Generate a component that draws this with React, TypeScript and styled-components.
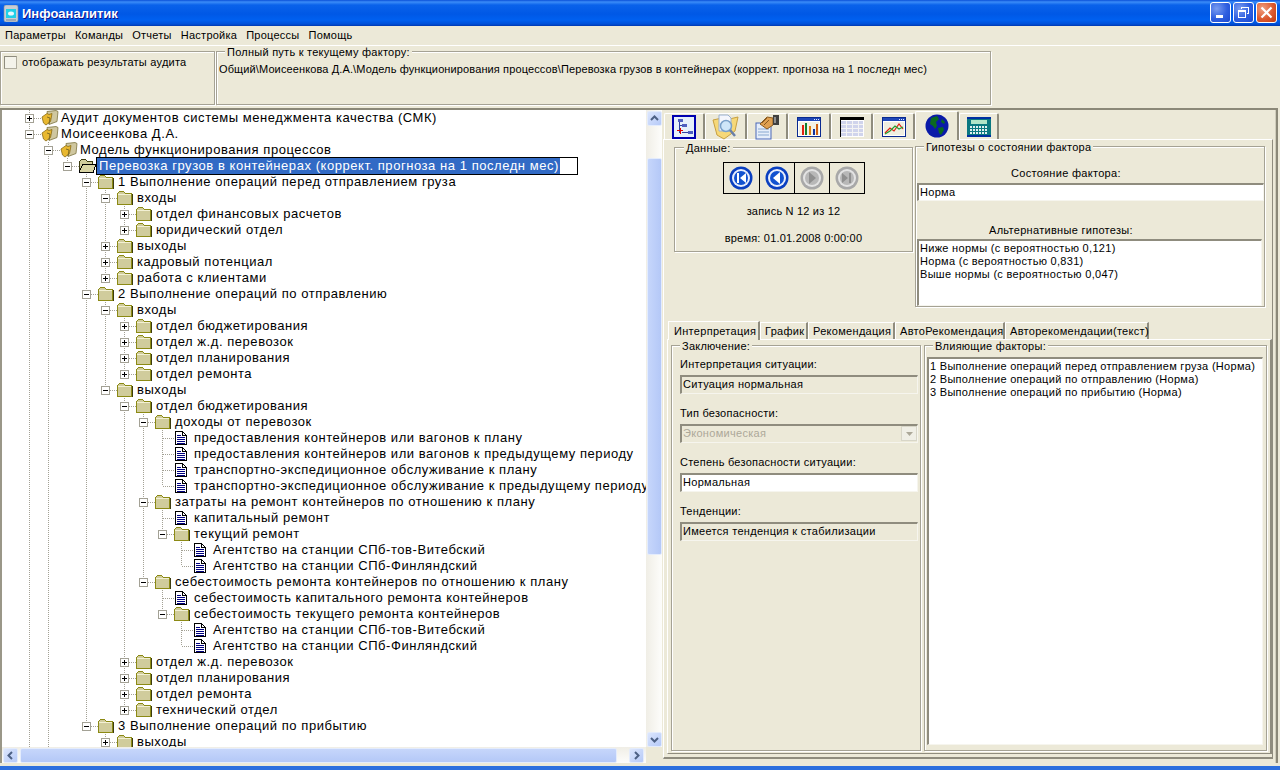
import React from 'react'
import styled, { createGlobalStyle } from 'styled-components'

const GlobalStyle = createGlobalStyle`
  html, body { margin: 0; padding: 0; background: #ece9d8; }
  * { box-sizing: border-box; }
`

type Node = { d: number; t: string; kind?: 'open' | 'closed' | 'leaf' | 'root' | 'sel' }

const rows: Node[] = [
  { d: 0, t: 'Аудит документов системы менеджмента качества (СМК)', kind: 'root' },
  { d: 0, t: 'Моисеенкова Д.А.', kind: 'root' },
  { d: 1, t: 'Модель функционирования процессов', kind: 'root' },
  { d: 2, t: 'Перевозка грузов в контейнерах (коррект. прогноза на 1 последн мес)', kind: 'sel' },
  { d: 3, t: '1 Выполнение операций перед отправлением груза', kind: 'open' },
  { d: 4, t: 'входы', kind: 'open' },
  { d: 5, t: 'отдел финансовых расчетов' },
  { d: 5, t: 'юридический отдел' },
  { d: 4, t: 'выходы' },
  { d: 4, t: 'кадровый потенциал' },
  { d: 4, t: 'работа с клиентами' },
  { d: 3, t: '2 Выполнение операций по отправлению', kind: 'open' },
  { d: 4, t: 'входы', kind: 'open' },
  { d: 5, t: 'отдел бюджетирования' },
  { d: 5, t: 'отдел ж.д. перевозок' },
  { d: 5, t: 'отдел планирования' },
  { d: 5, t: 'отдел ремонта' },
  { d: 4, t: 'выходы', kind: 'open' },
  { d: 5, t: 'отдел бюджетирования', kind: 'open' },
  { d: 6, t: 'доходы от перевозок', kind: 'open' },
  { d: 7, t: 'предоставления контейнеров или вагонов к плану', kind: 'leaf' },
  { d: 7, t: 'предоставления контейнеров или вагонов к предыдущему периоду', kind: 'leaf' },
  { d: 7, t: 'транспортно-экспедиционное обслуживание к плану', kind: 'leaf' },
  { d: 7, t: 'транспортно-экспедиционное обслуживание к предыдущему периоду', kind: 'leaf' },
  { d: 6, t: 'затраты на ремонт контейнеров по отношению к плану', kind: 'open' },
  { d: 7, t: 'капитальный ремонт', kind: 'leaf' },
  { d: 7, t: 'текущий ремонт', kind: 'open' },
  { d: 8, t: 'Агентство на станции СПб-тов-Витебский', kind: 'leaf' },
  { d: 8, t: 'Агентство на станции СПб-Финляндский', kind: 'leaf' },
  { d: 6, t: 'себестоимость ремонта контейнеров по отношению к плану', kind: 'open' },
  { d: 7, t: 'себестоимость капитального ремонта контейнеров', kind: 'leaf' },
  { d: 7, t: 'себестоимость текущего ремонта контейнеров', kind: 'open' },
  { d: 8, t: 'Агентство на станции СПб-тов-Витебский', kind: 'leaf' },
  { d: 8, t: 'Агентство на станции СПб-Финляндский', kind: 'leaf' },
  { d: 5, t: 'отдел ж.д. перевозок' },
  { d: 5, t: 'отдел планирования' },
  { d: 5, t: 'отдел ремонта' },
  { d: 5, t: 'технический отдел' },
  { d: 3, t: '3 Выполнение операций по прибытию', kind: 'open' },
  { d: 4, t: 'выходы' },
]

// levels 0 and 1 run on below the visible part of the tree
const hasNext = (i: number, level: number) => {
  for (let j = i + 1; j < rows.length; j++) {
    if (rows[j].d < level) return false
    if (rows[j].d === level) return true
  }
  return level < 2
}

const isExpanded = (n: Node, i: number) => rows[i + 1] && rows[i + 1].d > n.d

const Window = styled.div`
  width: 1280px;
  height: 770px;
  display: flex;
  flex-direction: column;
  overflow: hidden;
  background: #ece9d8;
  font-family: 'Liberation Sans', Arial, sans-serif;
  font-size: 11px;
  color: #000;
`

const TitleBar = styled.div`
  height: 26px;
  flex: none;
  display: flex;
  align-items: center;
  padding: 0 3px 0 3px;
  background: linear-gradient(to bottom, #0a50d8 0, #3b8cf8 2px, #0a62ea 5px, #0058e6 14px, #0060f0 20px, #0050d8 24px, #0038b0 26px);
`

const TitleText = styled.span`
  margin-left: 3px;
  font-weight: bold;
  font-size: 13px;
  color: #fff;
  text-shadow: 1px 1px 0 #0f1089;
  flex: 1;
`

const CaptionButton = styled.div<{ $close?: boolean }>`
  width: 21px;
  height: 21px;
  margin-left: 2px;
  margin-top: -2px;
  border: 1px solid #fff;
  border-radius: 3px;
  display: flex;
  align-items: center;
  justify-content: center;
  background: ${p => p.$close
    ? 'radial-gradient(circle at 30% 30%, #f0a080, #dc5a30 55%, #c03a10)'
    : 'radial-gradient(circle at 30% 30%, #7a9cf0, #2f5fe0 55%, #1a48d0)'};
`

const MenuBar = styled.div`
  height: 20px;
  flex: none;
  display: flex;
  align-items: center;
  gap: 9px;
  padding: 0 5px 2px;
  border-bottom: 1px solid #fff;
`

const MenuItem = styled.span`
  letter-spacing: 0.25px;
`

const TopPanel = styled.div`
  height: 62px;
  flex: none;
  display: flex;
  gap: 1px;
  padding: 5px 289px 3px 0;
`

const Raised = styled.div<{ $w?: number }>`
  position: relative;
  width: ${p => (p.$w ? `${p.$w}px` : 'auto')};
  flex: ${p => (p.$w ? 'none' : 1)};
  border: 1px solid #a5a294;
  box-shadow: inset 1px 1px 0 #fff, 1px 1px 0 #fff;
`

const AuditBox = styled(Raised)`
  display: flex;
  align-items: flex-start;
  gap: 5px;
  padding: 4px 3px;
`

const Checkbox = styled.span`
  width: 13px;
  height: 13px;
  flex: none;
  background: #f4f3ea;
  border: 1px solid #b0ad9e;
  border-top-color: #8f8c7e;
  border-left-color: #8f8c7e;
`

const Caption = styled.span`
  letter-spacing: 0.25px;
  line-height: 13px;
`

const Legend = styled.span`
  position: absolute;
  top: -6px;
  left: ${p => p.theme.left ?? 8}px;
  padding: 0 2px;
  background: #ece9d8;
  letter-spacing: 0.25px;
  line-height: 13px;
  white-space: nowrap;
`

const PathText = styled.div`
  padding: 11px 2px 0;
  letter-spacing: 0.12px;
  white-space: nowrap;
`

const Main = styled.div`
  flex: 1;
  min-height: 0;
  display: flex;
  border-top: 2px solid #8b8878;
  margin-bottom: 3px;
  margin-right: 2px;
`

const LeftColumn = styled.div`
  width: 662px;
  flex: none;
  display: flex;
  flex-direction: column;
  border-left: 2px solid #9a9788;
`

const TreeArea = styled.div`
  height: 637px;
  flex: none;
  display: flex;
`

const Tree = styled.div`
  flex: 1;
  min-width: 0;
  background: #fff;
  overflow: hidden;
  padding-left: 18px;
`

const Row = styled.div`
  height: 16px;
  display: flex;
  align-items: center;
  white-space: nowrap;
`

const Guide = styled.span<{ $on: boolean }>`
  width: 19px;
  height: 16px;
  flex: none;
  background: ${p => (p.$on
    ? 'linear-gradient(to bottom, #a3a195 50%, transparent 50%) 9px 0 / 1px 2px repeat-y'
    : 'none')};
`

const IconSlot = styled.span`
  width: 20px;
  height: 16px;
  flex: none;
  display: flex;
  align-items: center;
`

const Label = styled.span`
  font-size: 13px;
  letter-spacing: 0.55px;
  line-height: 16px;
`

const EditBox = styled.span`
  width: 480px;
  height: 16px;
  margin-left: -2px;
  background: #fff;
  outline: 1px solid #000;
  display: flex;
  position: relative;
`

const SelectedText = styled(Label)`
  background: #316ac5;
  color: #fff;
  padding: 0 1px 0 2px;
`

const VScroll = styled.div`
  width: 16px;
  flex: none;
  display: flex;
  flex-direction: column;
  align-items: center;
  padding: 1px 0 0;
  background: linear-gradient(to right, #f0eee6, #fdfdfb);
`

const HScroll = styled.div`
  height: 16px;
  flex: none;
  display: flex;
  align-items: center;
  padding-left: 1px;
  background: linear-gradient(to bottom, #f0eee6, #fdfdfb);
`

const ScrollButton = styled.div`
  width: 15px;
  height: 15px;
  flex: none;
  border: 1px solid #e4ecfc;
  border-radius: 2px;
  background: linear-gradient(135deg, #dce6fd, #b6caf8);
  display: flex;
  align-items: center;
  justify-content: center;
`

const VThumb = styled.div`
  width: 15px;
  height: 397px;
  margin-top: 32px;
  margin-bottom: auto;
  border: 1px solid #e4ecfc;
  border-radius: 2px;
  background: linear-gradient(to right, #c6d6fb, #b4c8f7);
`

const HThumb = styled.div`
  width: 597px;
  height: 15px;
  margin-left: 2px;
  margin-right: 12px;
  border: 1px solid #e4ecfc;
  border-radius: 2px;
  background: linear-gradient(to bottom, #c6d6fb, #b4c8f7);
`

const Corner = styled.div`
  width: 16px;
  height: 16px;
  flex: none;
  margin-left: 2px;
  background: #ece9d8;
`

const RightPane = styled.div`
  flex: 1;
  min-width: 0;
  display: flex;
  flex-direction: column;
  padding: 0 3px 4px 1px;
  border-right: 2px solid #8b8878;
  box-shadow: inset -1px 0 0 #d0cdbc;
`

const IconTabs = styled.div`
  height: 29px;
  flex: none;
  display: flex;
  align-items: flex-end;
  padding-left: 1px;
`

const IconTab = styled.div<{ $w: number; $active?: boolean }>`
  width: ${p => p.$w}px;
  height: ${p => (p.$active ? 29 : 26)}px;
  margin-bottom: ${p => (p.$active ? -1 : 0)}px;
  position: relative;
  z-index: ${p => (p.$active ? 2 : 0)};
  background: #ece9d8;
  border-top: 1px solid #fff;
  border-left: 1px solid #fff;
  border-right: 2px solid #8f8c7e;
  border-radius: 2px 2px 0 0;
  display: flex;
  align-items: center;
  justify-content: center;
`

const TabPanel = styled.div`
  flex: 1;
  min-height: 0;
  display: flex;
  flex-direction: column;
  padding: 6px 0 3px 3px;
  border-top: 1px solid #fff;
  border-left: 1px solid #fff;
  border-right: 1px solid #8f8c7e;
  border-bottom: 2px solid #8f8c7e;
`

const UpperRow = styled.div`
  height: 161px;
  flex: none;
  display: flex;
  align-items: flex-start;
  gap: 2px;
  padding-left: 7px;
`

const Group = styled.div<{ $w: number; $h: number }>`
  position: relative;
  width: ${p => p.$w}px;
  height: ${p => p.$h}px;
  flex: none;
  border: 1px solid #a5a294;
  box-shadow: inset 1px 1px 0 #fff, 1px 1px 0 #fff;
`

const DataGroup = styled(Group)`
  margin-top: 1px;
  display: flex;
  flex-direction: column;
  align-items: center;
  padding-top: 14px;
`

const NavBox = styled.div`
  display: flex;
  border: 1px solid #000;
  height: 32px;
`

const NavCell = styled.div`
  width: 35px;
  display: flex;
  align-items: center;
  justify-content: center;
  & + & { border-left: 1px solid #000; }
`

const DataLine = styled.div<{ $top: number }>`
  margin-top: ${p => p.$top}px;
  letter-spacing: 0.2px;
  line-height: 13px;
`

const HypoGroup = styled(Group)`
  display: flex;
  flex-direction: column;
  padding-left: 1px;
`

const CenterLabel = styled.div<{ $top: number; $shift: number }>`
  margin-top: ${p => p.$top}px;
  margin-left: ${p => p.$shift}px;
  letter-spacing: 0.3px;
  line-height: 13px;
`

const Sunken = styled.div<{ $gray?: boolean; $disabled?: boolean; $h?: number }>`
  height: ${p => (p.$h ? `${p.$h}px` : 'auto')};
  background: ${p => (p.$gray || p.$disabled ? '#ece9d8' : '#fff')};
  color: ${p => (p.$disabled ? '#aca899' : '#000')};
  border-top: 2px solid #8f8c7e;
  border-left: 2px solid #8f8c7e;
  border-right: 1px solid #f6f5ee;
  border-bottom: 1px solid #f6f5ee;
  padding: 1px 0 0 1px;
  letter-spacing: 0.3px;
  line-height: 13px;
  display: flex;
  justify-content: space-between;
`

const ListBox = styled(Sunken)<{ $w?: number }>`
  display: block;
  width: ${p => (p.$w ? `${p.$w}px` : 'auto')};
  flex: ${p => (p.$w ? 'none' : 1)};
`

const InnerTabs = styled.div`
  height: 19px;
  flex: none;
  display: flex;
  align-items: flex-end;
  margin-top: 13px;
  padding-left: 1px;
`

const InnerTab = styled.div<{ $w: number; $active?: boolean }>`
  width: ${p => p.$w}px;
  height: ${p => (p.$active ? 19 : 17)}px;
  margin-bottom: ${p => (p.$active ? -1 : 0)}px;
  position: relative;
  z-index: ${p => (p.$active ? 2 : 0)};
  background: #ece9d8;
  border-top: 1px solid #fff;
  border-left: 1px solid #fff;
  border-right: 2px solid #8f8c7e;
  padding: ${p => (p.$active ? 3 : 2)}px 0 0 ${p => (p.$active ? 5 : 4)}px;
  letter-spacing: 0.3px;
  line-height: 13px;
  white-space: nowrap;
`

const InnerPanel = styled.div`
  flex: 1;
  min-height: 0;
  display: flex;
  gap: 3px;
  padding: 5px 3px 2px 3px;
  border-top: 1px solid #fff;
  border-left: 1px solid #fff;
  border-right: 2px solid #8f8c7e;
  border-bottom: 1px solid #8f8c7e;
`

const ConclusionGroup = styled(Raised)`
  display: flex;
  flex-direction: column;
  padding: 12px 2px 0 8px;
`

const FactorsGroup = styled(Raised)`
  display: flex;
  flex-direction: column;
  padding: 11px 3px 5px 2px;
`

const FieldLabel = styled.div<{ $top: number }>`
  margin-top: ${p => p.$top}px;
  margin-bottom: 4px;
  letter-spacing: 0.25px;
  line-height: 13px;
`

const ComboArrow = styled.span`
  width: 16px;
  height: 15px;
  margin-top: -1px;
  background: #f0efe6;
  border: 1px solid #d8d6c8;
  display: flex;
  align-items: center;
  justify-content: center;
`

const BottomStrip = styled.div`
  height: 4px;
  flex: none;
  background: #2c6fde;
`

function FolderIcon() {
  return (
    <svg width="16" height="14" viewBox="0 0 16 14" shapeRendering="crispEdges">
      <path d="M.5 13.5V2.5L2.5.5h4l2 2h6v11z" fill="#d0cc9c" stroke="#8c8a14" />
      <path d="M1 3.5h13" stroke="#f2f0d4" />
      <path d="M15.5 3v11H1.5" fill="none" stroke="#3c3c10" />
    </svg>
  )
}

function RootFolderIcon() {
  return (
    <svg width="18" height="16" viewBox="0 0 18 16">
      <path d="M6 1.5l9-1 2 1-1 10-8 3z" fill="#cfc7a0" stroke="#7c7440" strokeWidth=".8" />
      <path d="M1 7l5-3.5 2 1 3-1-1.5 8L5 15 2.5 13z" fill="#e8b830" stroke="#8a6c14" strokeWidth=".8" />
      <path d="M6 7l3 1-1 6" fill="none" stroke="#6a5a20" strokeWidth=".8" />
    </svg>
  )
}

function OpenFolderIcon() {
  return (
    <svg width="18" height="14" viewBox="0 0 18 14" shapeRendering="crispEdges">
      <path d="M.5 12.5V2.5L2.5.5h4l2 2h5v3" fill="#d0cc9c" stroke="#3c3c10" />
      <path d="M.5 12.5l3-7h13.5l-3 8H1z" fill="#d8d4a4" stroke="#000" />
    </svg>
  )
}

function DocIcon() {
  return (
    <svg width="12" height="14" viewBox="0 0 12 14" shapeRendering="crispEdges" style={{ marginLeft: 1 }}>
      <path d="M.5.5h7l4 4v9H.5z" fill="#fff" stroke="#000" />
      <path d="M7.5.5v4h4" fill="none" stroke="#000" />
      <path d="M2 4.5h4M2 6.5h8M2 8.5h8M2 10.5h8M2 12.5h8" stroke="#000080" />
    </svg>
  )
}

function Connector({ top, bottom, box, plus }: { top: boolean; bottom: boolean; box: boolean; plus: boolean }) {
  return (
    <svg width="21" height="16" viewBox="0 0 21 16" shapeRendering="crispEdges" style={{ flex: 'none' }}>
      {top && <path d="M9.5 0V8" stroke="#a3a195" strokeDasharray="1 1" />}
      {bottom && <path d="M9.5 8V16" stroke="#a3a195" strokeDasharray="1 1" />}
      <path d="M10 8.5H21" stroke="#a3a195" strokeDasharray="1 1" />
      {box && (
        <>
          <rect x="5.5" y="4.5" width="8" height="8" fill="#fff" stroke="#a3a195" />
          <path d="M7 8.5h5" stroke="#000" />
          {plus && <path d="M9.5 6v5" stroke="#000" />}
        </>
      )}
    </svg>
  )
}

function Chevron({ dir }: { dir: 'up' | 'down' | 'left' | 'right' }) {
  const d = {
    up: 'M2 7l3.5-3.5L9 7',
    down: 'M2 4l3.5 3.5L9 4',
    left: 'M7 2L3.5 5.5 7 9',
    right: 'M4 2l3.5 3.5L4 9',
  }[dir]
  return (
    <svg width="11" height="11" viewBox="0 0 11 11">
      <path d={d} fill="none" stroke="#4d6185" strokeWidth="2" />
    </svg>
  )
}

function NavIcon({ glyph, active }: { glyph: 'first' | 'prev' | 'next' | 'last'; active: boolean }) {
  const ring = active ? '#0a3fc0' : '#a8a8a8'
  const rim = active ? '#e8eefc' : '#e4e4e4'
  const core = active ? '#1252d0' : '#b8b8b8'
  const mark = active ? '#fff' : '#909090'
  const shape = {
    first: <path d="M8 7h2v10H8zM17 7v10l-6-5z" />,
    prev: <path d="M15 6v12l-7-6z" />,
    next: <path d="M9 6v12l7-6z" />,
    last: <path d="M7 7v10l6-5zM14 7h2v10h-2z" />,
  }[glyph]
  return (
    <svg width="24" height="24" viewBox="0 0 24 24">
      <circle cx="12" cy="12" r="11.5" fill={ring} />
      <circle cx="12" cy="12" r="9" fill={rim} />
      <circle cx="12" cy="12" r="7" fill={core} />
      <g fill={mark}>{shape}</g>
    </svg>
  )
}

function TreeDiagramIcon() {
  return (
    <svg width="24" height="24" viewBox="0 0 24 24" shapeRendering="crispEdges">
      <rect x=".5" y=".5" width="23" height="23" fill="#e6f0fa" stroke="#0000b0" />
      <rect x="1.5" y="1.5" width="21" height="21" fill="none" stroke="#0000b0" />
      <rect x="6" y="4" width="5" height="3" fill="#5060c0" />
      <rect x="10" y="9" width="5" height="3" fill="#5060c0" />
      <rect x="16" y="16" width="5" height="3" fill="#5060c0" />
      <path d="M7.5 7v11M7.5 10.5H10M10 17.5h6" stroke="#3040a0" />
      <path d="M5 15.5h6M8 13v6" stroke="#e00000" />
    </svg>
  )
}

function SearchFolderIcon() {
  return (
    <svg width="28" height="26" viewBox="0 0 28 26">
      <path d="M1 6l9-2 3 2 13-3-3 14-11 8-7-4z" fill="#f6d878" stroke="#c8a040" />
      <path d="M7 1h9l3 3v13H7z" fill="#f4f6fc" stroke="#9ab0d0" />
      <circle cx="14" cy="12" r="5.5" fill="#cfe6f8" stroke="#7aa0c8" strokeWidth="1.5" />
      <path d="M18 16l5 6" stroke="#6a80a8" strokeWidth="2.5" />
    </svg>
  )
}

function HandDocIcon() {
  return (
    <svg width="26" height="26" viewBox="0 0 26 26">
      <rect x="2" y="9" width="15" height="16" fill="#e6eefa" stroke="#4a68b8" />
      <path d="M4 15h11M4 18h11M4 21h11" stroke="#88a8d0" />
      <path d="M6 10l7-7 6 1v7l-6 4z" fill="#e0a050" stroke="#8a5a20" />
      <path d="M8 9l5-5M10 11l5-5" stroke="#8a5a20" />
      <rect x="19" y="1" width="6" height="10" fill="#404040" />
      <rect x="20" y="3" width="2" height="6" fill="#909090" />
    </svg>
  )
}

function WindowFrame({ children }: { children: React.ReactNode }) {
  return (
    <svg width="24" height="20" viewBox="0 0 24 20" shapeRendering="crispEdges">
      <rect x=".5" y=".5" width="23" height="19" fill="#fff" stroke="#0a2a90" />
      <rect x="1" y="1" width="22" height="3" fill="#2048b8" />
      <path d="M17 2h1M19 2h1M21 2h1" stroke="#e0e8ff" />
      {children}
    </svg>
  )
}

function BarChartIcon() {
  return (
    <WindowFrame>
      <rect x="2" y="5" width="20" height="13" fill="#f4f2e4" />
      <rect x="5" y="8" width="2" height="10" fill="#e02010" />
      <rect x="8" y="6" width="2" height="12" fill="#108030" />
      <rect x="12" y="9" width="2" height="9" fill="#e08010" />
      <rect x="16" y="12" width="2" height="6" fill="#1030a0" />
      <rect x="19" y="7" width="2" height="11" fill="#d06010" />
    </WindowFrame>
  )
}

function TableIcon() {
  return (
    <svg width="24" height="20" viewBox="0 0 24 20" shapeRendering="crispEdges">
      <rect x="0" y="0" width="24" height="20" fill="#fff" stroke="#000" />
      <rect x="0" y="0" width="24" height="3" fill="#000" />
      <rect x="1" y="4" width="22" height="15" fill="#d0d4ec" />
      <path d="M1 7.5h22M1 11.5h22M1 15.5h22M6.5 4v15M12.5 4v15M18.5 4v15" stroke="#f4f4f4" />
    </svg>
  )
}

function LineChartIcon() {
  return (
    <WindowFrame>
      <rect x="2" y="5" width="20" height="13" fill="#f0eee0" />
      <path d="M3 16l5-5 4 3 5-7 4 5" fill="none" stroke="#e02010" strokeWidth="1.2" shapeRendering="auto" />
      <path d="M3 17l5-3 5-5 4 3 4-2" fill="none" stroke="#20a030" strokeWidth="1.2" shapeRendering="auto" />
    </WindowFrame>
  )
}

function GlobeIcon() {
  return (
    <svg width="24" height="24" viewBox="0 0 24 24">
      <circle cx="12" cy="12" r="11.5" fill="#0a1aa8" />
      <path d="M6 4l6-2 2 3-3 3 1 4-2 3-2-3-3-2zM13 14l5-1 1 3-3 5-2-2zM17 5l3 3-1 2-3-2z" fill="#0a6a20" />
    </svg>
  )
}

function CalculatorIcon() {
  return (
    <svg width="24" height="20" viewBox="0 0 24 20" shapeRendering="crispEdges">
      <rect x="0" y="1" width="24" height="18" fill="#0a7880" />
      <rect x="0" y="0" width="24" height="2" fill="#0030a0" />
      <rect x="0" y="18" width="24" height="2" fill="#0030a0" />
      <rect x="4" y="3" width="16" height="4" fill="#b0e4c8" />
      {[9, 12, 15].map(y =>
        [3, 6, 9, 12, 15, 18].map(x => <rect key={`${x}-${y}`} x={x} y={y} width="2" height="2" fill="#e0f0f0" />),
      )}
    </svg>
  )
}

function AppIcon() {
  return (
    <svg width="16" height="17" viewBox="0 0 16 17">
      <rect x="1" y="0" width="14" height="17" rx="2" fill="#c8ccd4" stroke="#8090a0" strokeWidth=".6" />
      <rect x="3" y="4" width="10" height="9" fill="#20d0e8" />
      <ellipse cx="8" cy="8.5" rx="3" ry="2" fill="#e8f8ff" />
      <rect x="3" y="14" width="10" height="2" fill="#a0a8b4" />
    </svg>
  )
}

const tabIcons = [
  { w: 41, icon: <TreeDiagramIcon /> },
  { w: 42, icon: <SearchFolderIcon /> },
  { w: 41, icon: <HandDocIcon /> },
  { w: 43, icon: <BarChartIcon /> },
  { w: 42, icon: <TableIcon /> },
  { w: 42, icon: <LineChartIcon /> },
  { w: 44, icon: <GlobeIcon />, active: true },
  { w: 40, icon: <CalculatorIcon /> },
]

const menu = ['Параметры', 'Команды', 'Отчеты', 'Настройка', 'Процессы', 'Помощь']

export default function App() {
  return (
    <Window>
      <GlobalStyle />
      <TitleBar>
        <AppIcon />
        <TitleText>Инфоаналитик</TitleText>
        <CaptionButton>
          <svg width="13" height="13" viewBox="0 0 13 13" shapeRendering="crispEdges">
            <rect x="2" y="9" width="7" height="3" fill="#fff" />
          </svg>
        </CaptionButton>
        <CaptionButton>
          <svg width="13" height="13" viewBox="0 0 13 13" shapeRendering="crispEdges">
            <path d="M4.5 2.5V1h7v6H10M1 4.5h7.5V11.5H1z" fill="none" stroke="#fff" />
            <path d="M1 4.5h8" stroke="#fff" strokeWidth="2" />
          </svg>
        </CaptionButton>
        <CaptionButton $close>
          <svg width="13" height="13" viewBox="0 0 13 13">
            <path d="M1.5 1.5l10 10M11.5 1.5l-10 10" stroke="#fff" strokeWidth="2.2" />
          </svg>
        </CaptionButton>
      </TitleBar>

      <MenuBar>
        {menu.map(m => (
          <MenuItem key={m}>{m}</MenuItem>
        ))}
      </MenuBar>

      <TopPanel>
        <AuditBox $w={215}>
          <Checkbox />
          <Caption>отображать результаты аудита</Caption>
        </AuditBox>
        <Raised>
          <Legend theme={{ left: 8 }}>Полный путь к текущему фактору:</Legend>
          <PathText>
            Общий\Моисеенкова Д.А.\Модель функционирования процессов\Перевозка грузов в контейнерах (коррект. прогноза на 1 последн мес)
          </PathText>
        </Raised>
      </TopPanel>

      <Main>
        <LeftColumn>
          <TreeArea>
            <Tree>
              {rows.map((n, i) => {
                const kind = n.kind ?? 'closed'
                const expanded = !!isExpanded(n, i)
                return (
                  <Row key={i}>
                    {Array.from({ length: n.d }, (_, l) => (
                      <Guide key={l} $on={hasNext(i, l)} />
                    ))}
                    <Connector top bottom={hasNext(i, n.d)} box={kind !== 'leaf'} plus={!expanded} />
                    <IconSlot>
                      {kind === 'root' && <RootFolderIcon />}
                      {kind === 'sel' && <OpenFolderIcon />}
                      {(kind === 'open' || kind === 'closed') && <FolderIcon />}
                      {kind === 'leaf' && <DocIcon />}
                    </IconSlot>
                    {kind === 'sel' ? (
                      <EditBox>
                        <SelectedText>{n.t}</SelectedText>
                      </EditBox>
                    ) : (
                      <Label>{n.t}</Label>
                    )}
                  </Row>
                )
              })}
            </Tree>
            <VScroll>
              <ScrollButton>
                <Chevron dir="up" />
              </ScrollButton>
              <VThumb />
              <ScrollButton>
                <Chevron dir="down" />
              </ScrollButton>
            </VScroll>
          </TreeArea>
          <HScroll>
            <ScrollButton>
              <Chevron dir="left" />
            </ScrollButton>
            <HThumb />
            <ScrollButton>
              <Chevron dir="right" />
            </ScrollButton>
            <Corner />
          </HScroll>
        </LeftColumn>

        <RightPane>
          <IconTabs>
            {tabIcons.map((t, i) => (
              <IconTab key={i} $w={t.w} $active={t.active}>
                {t.icon}
              </IconTab>
            ))}
          </IconTabs>

          <TabPanel>
            <UpperRow>
              <DataGroup $w={239} $h={105}>
                <Legend theme={{ left: 9 }}>Данные:</Legend>
                <NavBox>
                  <NavCell><NavIcon glyph="first" active /></NavCell>
                  <NavCell><NavIcon glyph="prev" active /></NavCell>
                  <NavCell><NavIcon glyph="next" active={false} /></NavCell>
                  <NavCell><NavIcon glyph="last" active={false} /></NavCell>
                </NavBox>
                <DataLine $top={11}>запись N 12 из 12</DataLine>
                <DataLine $top={14}>время: 01.01.2008 0:00:00</DataLine>
              </DataGroup>
              <HypoGroup $w={350} $h={161}>
                <Legend theme={{ left: 8 }}>Гипотезы о состоянии фактора</Legend>
                <CenterLabel $top={20} $shift={94}>Состояние фактора:</CenterLabel>
                <Sunken $h={18} style={{ marginTop: 3 }}>Норма</Sunken>
                <CenterLabel $top={23} $shift={72}>Альтернативные гипотезы:</CenterLabel>
                <ListBox $h={68} style={{ marginTop: 2, marginRight: 2 }}>
                  <div>Ниже нормы (с вероятностью 0,121)</div>
                  <div>Норма (с вероятностью 0,831)</div>
                  <div>Выше нормы (с вероятностью 0,047)</div>
                </ListBox>
              </HypoGroup>
            </UpperRow>

            <InnerTabs>
              <InnerTab $w={92} $active>Интерпретация</InnerTab>
              <InnerTab $w={48}>График</InnerTab>
              <InnerTab $w={87}>Рекомендация</InnerTab>
              <InnerTab $w={110}>АвтоРекомендация</InnerTab>
              <InnerTab $w={144}>Авторекомендации(текст)</InnerTab>
            </InnerTabs>

            <InnerPanel>
              <ConclusionGroup $w={250}>
                <Legend theme={{ left: 8 }}>Заключение:</Legend>
                <FieldLabel $top={0}>Интерпретация ситуации:</FieldLabel>
                <Sunken $gray $h={19}>Ситуация нормальная</Sunken>
                <FieldLabel $top={13}>Тип безопасности:</FieldLabel>
                <Sunken $disabled $h={19}>
                  Экономическая
                  <ComboArrow>
                    <svg width="7" height="4" viewBox="0 0 7 4">
                      <path d="M0 0h7L3.5 4z" fill="#aca899" />
                    </svg>
                  </ComboArrow>
                </Sunken>
                <FieldLabel $top={13}>Степень безопасности ситуации:</FieldLabel>
                <Sunken $h={19}>Нормальная</Sunken>
                <FieldLabel $top={13}>Тенденции:</FieldLabel>
                <Sunken $gray $h={19}>Имеется тенденция к стабилизации</Sunken>
              </ConclusionGroup>
              <FactorsGroup>
                <Legend theme={{ left: 8 }}>Влияющие факторы:</Legend>
                <ListBox>
                  <div>1 Выполнение операций перед отправлением груза (Норма)</div>
                  <div>2 Выполнение операций по отправлению (Норма)</div>
                  <div>3 Выполнение операций по прибытию (Норма)</div>
                </ListBox>
              </FactorsGroup>
            </InnerPanel>
          </TabPanel>
        </RightPane>
      </Main>

      <BottomStrip />
    </Window>
  )
}
